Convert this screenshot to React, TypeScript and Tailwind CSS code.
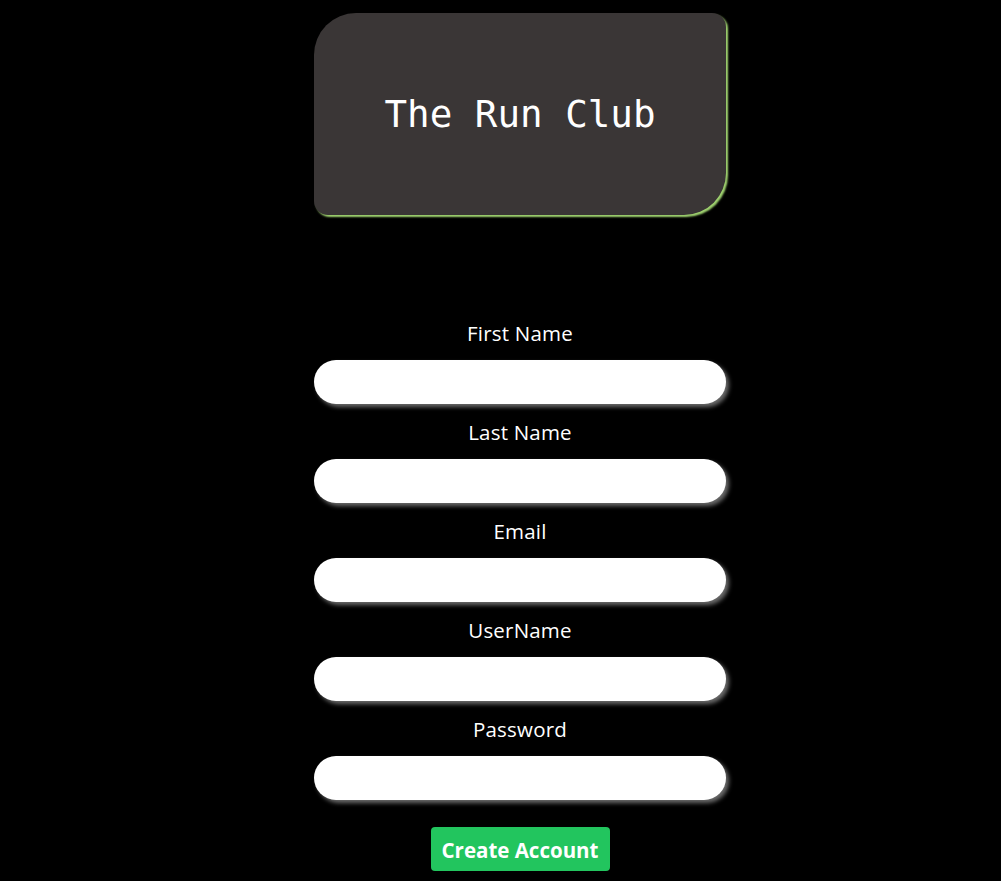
const fields = ['First Name', 'Last Name', 'Email', 'UserName', 'Password'];

export default function App() {
    return (
        <div className="min-h-[881px] bg-black font-['Open_Sans',sans-serif] text-white">
            <div className="ml-[314px] w-[412px] pt-[13px] flex flex-col">
                <header className="h-[202px] bg-[#3a3636] rounded-tl-[42px] rounded-tr-[14px] rounded-br-[42px] rounded-bl-[14px] shadow-[2px_2px_2px_#a0d470] flex items-center justify-center">
                    <h1 className="font-['DejaVu_Sans_Mono',monospace] text-[37.5px] leading-none pt-[2px]">The Run Club</h1>
                </header>

                <form className="mt-[105px] flex flex-col items-center" onSubmit={(e) => e.preventDefault()}>
                    {fields.map((f) => (
                        <label key={f} className="w-full flex flex-col items-center mb-[15px]">
                            <span className="text-[20.5px] leading-[27px] tracking-[0.2px]">{f}</span>
                            <input
                                type={f === 'Password' ? 'password' : 'text'}
                                className="mt-[13px] w-full h-[44px] rounded-full bg-white text-black px-5 outline-none shadow-[3px_3px_4px_#6b6b6b]"
                            />
                        </label>
                    ))}
                    <button
                        type="submit"
                        className="mt-[12px] w-[179px] h-[44px] bg-[#22c55e] rounded-[4px] text-[20.5px] font-bold text-white pt-[2px]"
                    >
                        Create Account
                    </button>
                </form>
            </div>
        </div>
    );
}
